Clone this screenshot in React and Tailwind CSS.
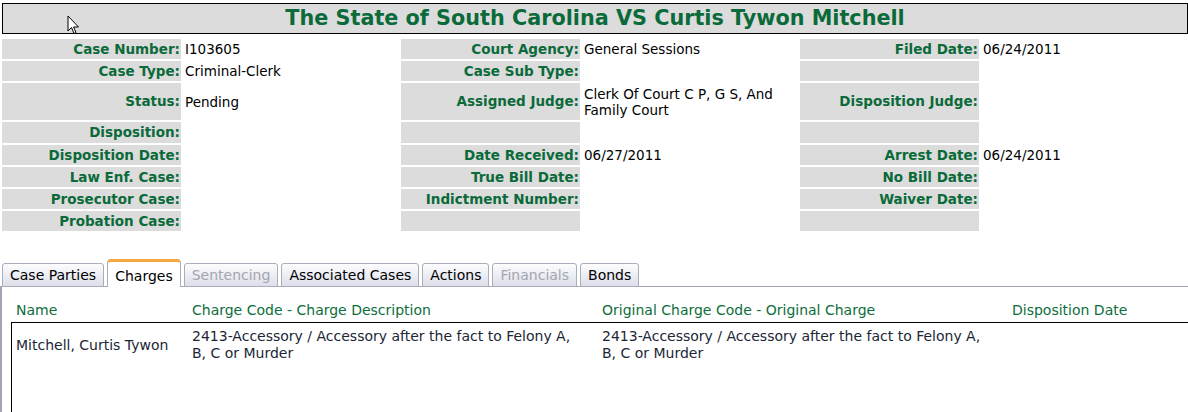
import React from "react";

const rows = [
  { h: "h-[20px]", cells: [["Case Number:", "I103605"], ["Court Agency:", "General Sessions"], ["Filed Date:", "06/24/2011"]] },
  { h: "h-[20px]", cells: [["Case Type:", "Criminal-Clerk"], ["Case Sub Type:", ""], ["", ""]] },
  {
    h: "h-[37px]",
    cells: [
      ["Status:", "Pending"],
      ["Assigned Judge:", <>Clerk Of Court C P, G S, And<br />Family Court</>],
      ["Disposition Judge:", ""],
    ],
  },
  { h: "h-[21px]", cells: [["Disposition:", ""], ["", ""], ["", ""]] },
  { h: "h-[20px]", cells: [["Disposition Date:", ""], ["Date Received:", "06/27/2011"], ["Arrest Date:", "06/24/2011"]] },
  { h: "h-[20px]", cells: [["Law Enf. Case:", ""], ["True Bill Date:", ""], ["No Bill Date:", ""]] },
  { h: "h-[20px]", cells: [["Prosecutor Case:", ""], ["Indictment Number:", ""], ["Waiver Date:", ""]] },
  { h: "h-[20px]", cells: [["Probation Case:", ""], ["", ""], ["", ""]] },
];

const tabs = [
  { name: "Case Parties" },
  { name: "Charges", active: true },
  { name: "Sentencing", disabled: true },
  { name: "Associated Cases" },
  { name: "Actions" },
  { name: "Financials", disabled: true },
  { name: "Bonds" },
];

function Cursor() {
  return (
    <svg className="absolute left-[67px] top-[15px]" width="13" height="20" viewBox="0 0 13 20">
      <path
        d="M1 1 L1 16 L4.5 12.5 L7 18.5 L9 17.6 L6.6 12 L11.5 12 Z"
        fill="#fff"
        stroke="#000"
        strokeWidth="1"
        strokeLinejoin="miter"
      />
    </svg>
  );
}

function Tab({ tab }) {
  if (tab.active) {
    return (
      <div className="relative z-10 h-[28px] px-[7px] pt-[3px] bg-white border-x border-[#a9aebb] border-t-[3px] border-t-[#f5a93c] rounded-t-[4px] text-[14px] leading-[22px] text-black">
        {tab.name}
      </div>
    );
  }
  return (
    <div
      className={`h-[24px] px-[7px] border border-[#a9aebb] rounded-t-[3px] bg-linear-to-b from-[#fdfdfe] to-[#dcdfeb] text-[14px] leading-[22px] ${
        tab.disabled ? "text-[#a4a6ae]" : "text-black"
      }`}
    >
      {tab.name}
    </div>
  );
}

export default function App() {
  return (
    <div className="relative w-[1188px] h-[412px] overflow-hidden bg-white font-['DejaVu_Sans',sans-serif]">
      {/* title bar */}
      <div className="mt-[3px] ml-[2px] h-[31px] border border-black bg-[#dcdcdc] flex items-center justify-center">
        <h1 className="text-[20.75px] font-bold text-[#0b6a3a] leading-none">
          The State of South Carolina VS Curtis Tywon Mitchell
        </h1>
      </div>

      {/* case details */}
      <div className="mt-[5px] ml-[2px] grid grid-cols-[179px_216px_179px_216px_179px_1fr] gap-[2px]">
        {rows.map((row, i) =>
          row.cells.map(([label, value], j) => (
            <React.Fragment key={`${i}-${j}`}>
              <div
                className={`${row.h} bg-[#dcdcdc] flex items-center justify-end pr-[1px] text-[13.5px] font-bold text-[#0b6a3a]`}
              >
                {label}
              </div>
              <div className={`${row.h} flex items-center pl-[2px] text-[13.5px] leading-[16px] text-black`}>
                <div>{value}</div>
              </div>
            </React.Fragment>
          ))
        )}
      </div>

      {/* tabs */}
      <div className="mt-[28px] h-[28px] pl-[2px] flex items-end gap-[3px]">
        {tabs.map((t) => (
          <Tab key={t.name} tab={t} />
        ))}
      </div>

      <div className="-mt-px border-t border-l-2 border-[#a0a5b2] h-[200px] pt-[15px]">
        <div className="ml-[9px] border-x border-transparent grid grid-cols-[176px_410px_410px_1fr] text-[14px] leading-[17px] text-[#0d6e3c]">
          <div className="pl-[4px]">Name</div>
          <div className="pl-[4px]">Charge Code - Charge Description</div>
          <div className="pl-[4px]">Original Charge Code - Original Charge</div>
          <div className="pl-[4px]">Disposition Date</div>
        </div>
        <div className="mt-[3px] ml-[9px] h-[100px] border-t border-l border-black pt-[5px] grid grid-cols-[176px_410px_410px_1fr] content-start text-[14px] leading-[17px] text-[#1b2636]">
          <div className="pl-[4px] self-center">Mitchell, Curtis Tywon</div>
          <div className="pl-[4px]">
            2413-Accessory / Accessory after the fact to Felony A,
            <br />
            B, C or Murder
          </div>
          <div className="pl-[4px]">
            2413-Accessory / Accessory after the fact to Felony A,
            <br />
            B, C or Murder
          </div>
          <div className="pl-[4px]"></div>
        </div>
      </div>

      <Cursor />
    </div>
  );
}
